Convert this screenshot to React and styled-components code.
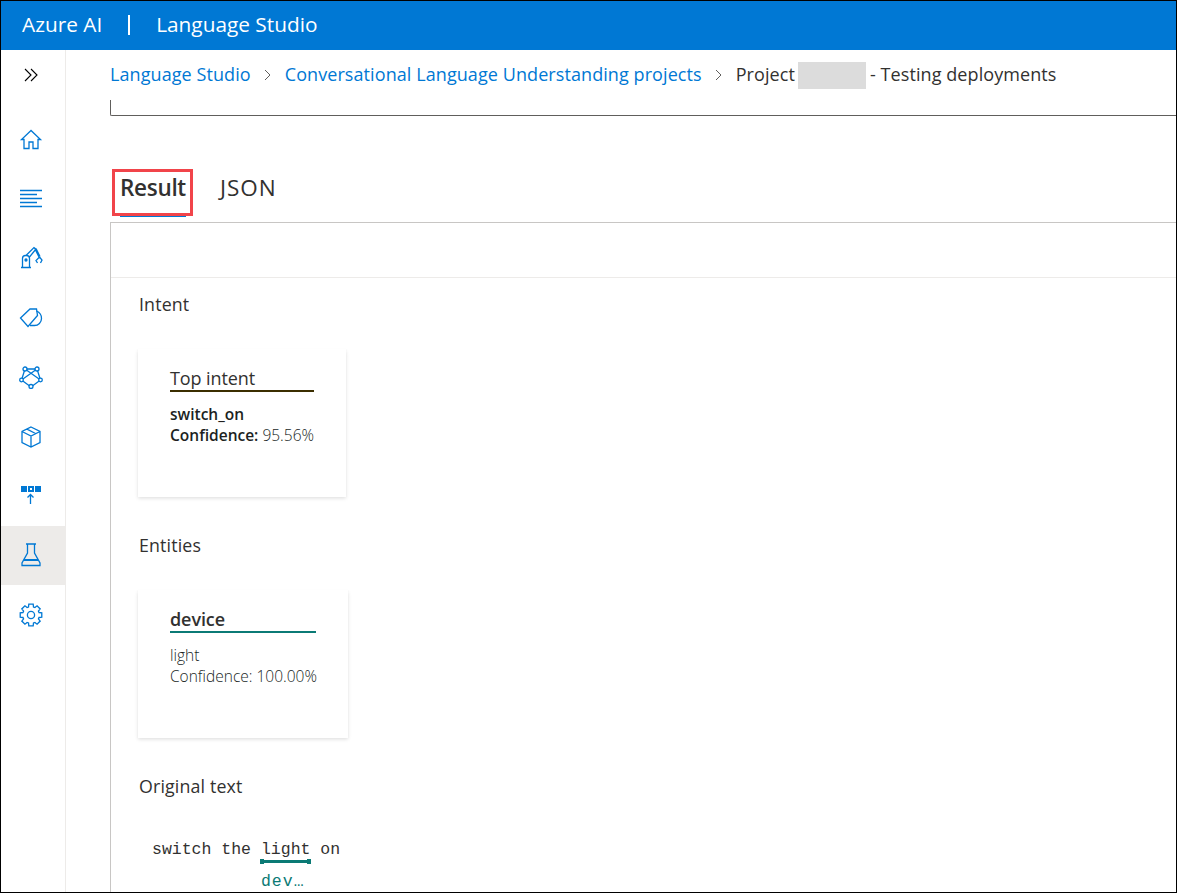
import React from 'react';
import styled, { createGlobalStyle } from 'styled-components';

const GlobalStyle = createGlobalStyle`
  html, body { margin: 0; padding: 0; background: #fff; }
  body { font-family: 'Open Sans', 'Noto Sans', Arial, sans-serif; color: #323130; }
`;

const Frame = styled.div`
  width: 1177px;
  height: 893px;
  box-sizing: border-box;
  border: 1px solid #000;
  overflow: hidden;
  display: flex;
  flex-direction: column;
`;

const TopBar = styled.header`
  flex: 0 0 49px;
  box-sizing: border-box;
  background: #0078d4;
  color: #fff;
  display: flex;
  align-items: center;
  padding: 0 0 3px 21px;
  font-size: 20.8px;
`;

const Divider = styled.span`
  width: 2px;
  height: 20px;
  background: #fff;
  margin: 2px 26px 0;
`;

const Body = styled.div`
  flex: 1;
  display: flex;
  min-height: 0;
`;

const Sidebar = styled.nav`
  flex: 0 0 64px;
  border-right: 1px solid #edebe9;
  display: flex;
  flex-direction: column;
`;

const Collapse = styled.div`
  height: 50px;
  margin-bottom: 10px;
  display: flex;
  align-items: center;
  justify-content: center;
  padding-right: 4px;
  color: #000;
`;

const NavItem = styled.div`
  height: 59.4px;
  display: flex;
  align-items: center;
  justify-content: center;
  padding-right: 4px;
  color: #0078d4;
  background: ${(p) => (p.$active ? '#edebe9' : 'transparent')};
`;

const Main = styled.main`
  flex: 1;
  min-width: 0;
  padding-left: 44px;
  display: flex;
  flex-direction: column;
`;

const Crumbs = styled.div`
  height: 50px;
  display: flex;
  align-items: center;
  font-size: 18px;
  letter-spacing: 0.08px;
  white-space: nowrap;
`;

const CrumbText = styled.span`
  margin-top: -2px;
  color: ${(p) => (p.$link ? '#0078d4' : '#323130')};
`;

const Chevron = styled.span`
  display: flex;
  margin: 0 12px;
  color: #605e5c;
`;

const Redacted = styled.span`
  width: 68px;
  height: 27px;
  background: #dcdcdc;
  margin: 0 4px 0 3px;
`;

const FilterBox = styled.div`
  height: 15px;
  border-left: 1px solid #605e5c;
  border-bottom: 1px solid #605e5c;
  border-bottom-left-radius: 2px;
`;

const Tabs = styled.div`
  height: 106px;
  box-sizing: border-box;
  display: flex;
  align-items: flex-end;
  gap: 34px;
  padding: 0 0 5px 10px;
  position: relative;
`;

const Tab = styled.div`
  height: 46px;
  box-sizing: border-box;
  padding-top: 1px;
  font-size: 22.5px;
  line-height: 32px;
  letter-spacing: ${(p) => (p.$active ? '-0.3px' : '1px')};
  font-weight: ${(p) => (p.$active ? 600 : 400)};
  border-bottom: 2px solid ${(p) => (p.$active ? '#0078d4' : 'transparent')};
`;

const Highlight = styled.div`
  position: absolute;
  left: 2px;
  top: 53px;
  width: 81px;
  height: 47px;
  box-sizing: border-box;
  border: 3px solid #f1444a;
`;

const Panel = styled.section`
  flex: 1;
  min-height: 0;
  border-top: 1px solid #c8c6c4;
  border-left: 1px solid #c8c6c4;
`;

const PanelBar = styled.div`
  height: 54px;
  border-bottom: 1px solid #edebe9;
`;

const Results = styled.div`
  padding-left: 27px;
`;

const Group = styled.div`
  height: 241px;
  box-sizing: border-box;
  padding-top: 14px;
`;

const GroupTitle = styled.h3`
  margin: 0 0 33px 1px;
  font-size: 17.8px;
  line-height: 24px;
  font-weight: 400;
  letter-spacing: 0.15px;
`;

const Card = styled.div`
  width: ${(p) => p.$width}px;
  height: 148px;
  box-sizing: border-box;
  padding: 17px 0 0 32px;
  background: #fff;
  box-shadow: 0 1.6px 3.6px rgba(0, 0, 0, 0.13), 0 0.3px 0.9px rgba(0, 0, 0, 0.1);
`;

const CardTitle = styled.div`
  width: ${(p) => p.$width}px;
  height: 24px;
  line-height: 24px;
  font-size: 18px;
  letter-spacing: -0.1px;
  font-weight: ${(p) => (p.$strong ? 600 : 400)};
  border-bottom: 2px solid ${(p) => p.$accent};
  margin-bottom: 12px;
`;

const CardLine = styled.div`
  font-size: 15.5px;
  line-height: 21px;
  white-space: nowrap;
  color: #201f1e;
  font-weight: ${(p) => (p.$strong ? 600 : 300)};
`;

const Light = styled.span`
  font-weight: 300;
`;

const Utterance = styled.div`
  display: flex;
  padding: 9px 0 0 14px;
  font-family: 'Liberation Mono', 'DejaVu Sans Mono', monospace;
  font-size: 16.5px;
  line-height: 20px;
  white-space: pre;
`;

const Labeled = styled.span`
  display: inline-flex;
  flex-direction: column;
`;

const EntityMark = styled.span`
  height: 3px;
  margin: 0 -1px;
  background: #0b7a75;
  position: relative;
  &::before, &::after {
    content: '';
    position: absolute;
    top: -1px;
    width: 4px;
    height: 5px;
    background: #0b7a75;
  }
  &::before { left: 0; }
  &::after { right: 0; }
`;

const EntityTag = styled.span`
  color: #0b7a75;
  line-height: 24px;
  margin-top: 7px;
  letter-spacing: 1px;
`;

const Icon = ({ children }) => (
  <svg width="24" height="24" viewBox="0 0 24 24" fill="none" stroke="currentColor" strokeWidth="1.3">{children}</svg>
);

const gearPath = (() => {
  const pts = [];
  for (let i = 0; i < 8; i += 1) {
    const a = (i * Math.PI) / 4;
    [[-0.3, 8.4], [-0.2, 11], [0.2, 11], [0.3, 8.4]].forEach(([d, r]) => {
      pts.push(`${(12 + r * Math.sin(a + d)).toFixed(2)} ${(12 - r * Math.cos(a + d)).toFixed(2)}`);
    });
  }
  return `M${pts.join(' L')} Z`;
})();

const icons = [
  <Icon key="home"><path d="M12 2.5 2.5 11.5H5V20.5H10V14H14V20.5H19V11.5H21.5Z" /></Icon>,
  <Icon key="lines"><path d="M1 3.5H23M1 7.5H18M1 11.5H23M1 15.5H18M1 19.5H23" /></Icon>,
  <Icon key="robot">
    <path d="M2 21.5H12M3.5 21.5V12.5A3 3 0 0 1 6.5 9.5H7.5A3 3 0 0 1 10.5 12.5V21.5M7 9.5 15 1.5 17 3 10.5 11M15.5 2 20 11M17 2.5 21 10.5M20.5 11 17 14.5 18.5 17M20.5 11 23 14 21.5 17" />
    <circle cx="7" cy="14" r="1" fill="currentColor" />
  </Icon>,
  <Icon key="tag">
    <path d="M1.5 12 11 3H17.5L18.5 9.5 9 20.5Z" />
    <path d="M17.5 5A8 8 0 0 1 22.5 12.5 7 7 0 0 1 15.5 19.5H11" />
  </Icon>,
  <Icon key="network">
    <path d="M6 4H18L21.5 15 12 22 2.5 15ZM6 4 21.5 15M18 4 2.5 15" />
    <circle cx="6" cy="4" r="2" fill="#fff" />
    <circle cx="18" cy="4" r="2" fill="#fff" />
    <circle cx="2.5" cy="15" r="1.8" fill="#fff" />
    <circle cx="21.5" cy="15" r="1.8" fill="#fff" />
    <circle cx="12" cy="21.5" r="2" fill="#fff" />
  </Icon>,
  <Icon key="cube"><path d="M12 2 21 6.5V17.5L12 22 3 17.5V6.5ZM3 6.5 12 11 21 6.5M12 11V22M8 4.2 16.5 8.5" /></Icon>,
  <Icon key="deploy">
    <path d="M2 2H8V8H2ZM16 2H22V8H16ZM9 2H15V8H9Z" fill="currentColor" stroke="none" />
    <rect x="11" y="4" width="2" height="2" fill="#fff" stroke="none" />
    <path d="M11.5 10.5V20M8.5 13.5 11.5 10.5 14.5 13.5" />
  </Icon>,
  <Icon key="flask">
    <path d="M7 1H17M8.5 1V10L3 20V22.5H21V20L15.5 10V1" />
    <path d="M5 17H19" strokeWidth="2" />
  </Icon>,
  <Icon key="gear">
    <path d={gearPath} />
    <circle cx="12" cy="12" r="3.6" />
  </Icon>,
];

const CrumbChevron = () => (
  <Chevron>
    <svg width="10" height="12" viewBox="0 0 10 12" fill="none" stroke="currentColor">
      <path d="M2 1 7 6 2 11" />
    </svg>
  </Chevron>
);

export default function App() {
  return (
    <Frame>
      <GlobalStyle />
      <TopBar>
        Azure AI
        <Divider />
        Language Studio
      </TopBar>
      <Body>
        <Sidebar>
          <Collapse>
            <svg width="16" height="16" viewBox="0 0 16 16" fill="none" stroke="currentColor" strokeWidth="1.1">
              <path d="M2 2 8 8 2 14M8 2 14 8 8 14" />
            </svg>
          </Collapse>
          {icons.map((icon, i) => (
            <NavItem key={i} $active={i === 7}>{icon}</NavItem>
          ))}
        </Sidebar>
        <Main>
          <Crumbs>
            <CrumbText $link>Language Studio</CrumbText>
            <CrumbChevron />
            <CrumbText $link>Conversational Language Understanding projects</CrumbText>
            <CrumbChevron />
            <CrumbText>Project</CrumbText>
            <Redacted />
            <CrumbText>- Testing deployments</CrumbText>
          </Crumbs>
          <FilterBox />
          <Tabs>
            <Tab $active>Result</Tab>
            <Tab>JSON</Tab>
            <Highlight />
          </Tabs>
          <Panel>
            <PanelBar />
            <Results>
              <Group>
                <GroupTitle>Intent</GroupTitle>
                <Card $width={208}>
                  <CardTitle $width={144} $accent="#3b2e00">Top intent</CardTitle>
                  <CardLine $strong>switch_on</CardLine>
                  <CardLine $strong>Confidence: <Light>95.56%</Light></CardLine>
                </Card>
              </Group>
              <Group>
                <GroupTitle>Entities</GroupTitle>
                <Card $width={210}>
                  <CardTitle $width={146} $accent="#0b7a75" $strong>device</CardTitle>
                  <CardLine>light</CardLine>
                  <CardLine>Confidence: 100.00%</CardLine>
                </Card>
              </Group>
              <Group>
                <GroupTitle>Original text</GroupTitle>
                <Utterance>
                  {'switch the '}
                  <Labeled>
                    light
                    <EntityMark />
                    <EntityTag>dev…</EntityTag>
                  </Labeled>
                  {' on'}
                </Utterance>
              </Group>
            </Results>
          </Panel>
        </Main>
      </Body>
    </Frame>
  );
}
